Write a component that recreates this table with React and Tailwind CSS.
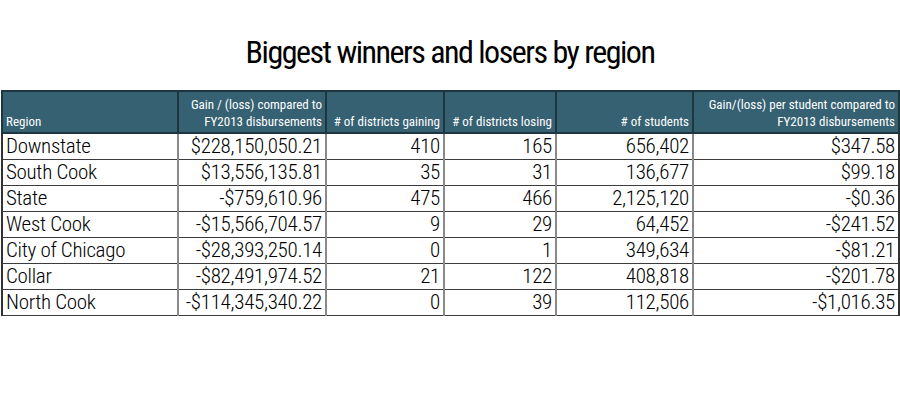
import React from "react";

const rows = [
  ["Downstate", "$228,150,050.21", "410", "165", "656,402", "$347.58"],
  ["South Cook", "$13,556,135.81", "35", "31", "136,677", "$99.18"],
  ["State", "-$759,610.96", "475", "466", "2,125,120", "-$0.36"],
  ["West Cook", "-$15,566,704.57", "9", "29", "64,452", "-$241.52"],
  ["City of Chicago", "-$28,393,250.14", "0", "1", "349,634", "-$81.21"],
  ["Collar", "-$82,491,974.52", "21", "122", "408,818", "-$201.78"],
  ["North Cook", "-$114,345,340.22", "0", "39", "112,506", "-$1,016.35"],
];

const headers = [
  ["Region"],
  ["Gain / (loss) compared to", "FY2013 disbursements"],
  ["# of districts gaining"],
  ["# of districts losing"],
  ["# of students"],
  ["Gain/(loss) per student compared to", "FY2013 disbursements"],
];

const App = () => {
  return (
    <div className="w-[900px] h-[400px] bg-white font-['Roboto_Condensed','DejaVu_Sans_Condensed',sans-serif] text-black">
      <h1 className="pt-[32px] text-center text-[32px] leading-[40px] tracking-[-1.5px] font-normal">
        Biggest winners and losers by region
      </h1>
      <table className="ml-px mt-[18px] w-[897px] border-collapse table-fixed">
        <colgroup>
          <col className="w-[176px]" />
          <col className="w-[148px]" />
          <col className="w-[118px]" />
          <col className="w-[112px]" />
          <col className="w-[137px]" />
          <col className="w-[206px]" />
        </colgroup>
        <thead>
          <tr className="bg-[#366172] text-white text-[13px] leading-[17px] h-[42px]">
            {headers.map((h, i) => (
              <th
                key={i}
                className={`border-2 border-[#1d3640] font-normal align-bottom px-[3px] pb-[2px] whitespace-nowrap ${i === 0 ? "text-left" : "text-right"}`}
              >
                {h.map((line, j) => (
                  <div key={j}>{line}</div>
                ))}
              </th>
            ))}
          </tr>
        </thead>
        <tbody className="text-[21px] leading-[24px] tracking-[-0.3px] font-light">
          {rows.map((r) => (
            <tr key={r[0]} className="h-[26px]">
              {r.map((c, i) => (
                <td
                  key={i}
                  className={`border-y border-y-[#3c3c3c] border-x-2 border-x-[#8a8a8a] px-[3px] whitespace-nowrap ${i === 0 ? "text-left border-l-[#333]" : "text-right"} ${i === 5 ? "border-r-[#333]" : ""}`}
                >
                  {c}
                </td>
              ))}
            </tr>
          ))}
        </tbody>
      </table>
    </div>
  );
};

export default App;
